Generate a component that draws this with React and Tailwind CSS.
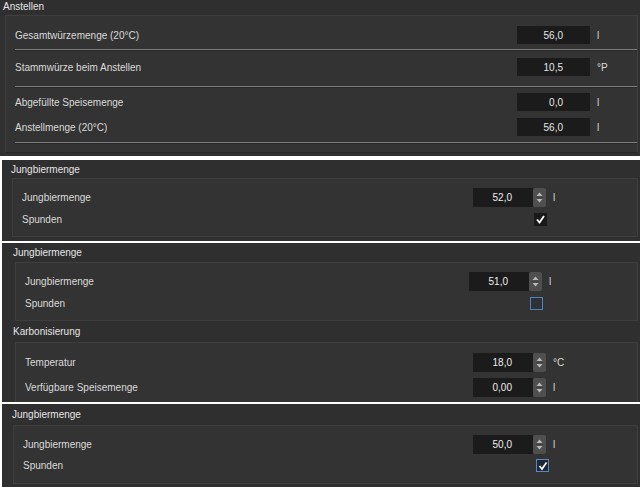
// App.jsx
const TEXT = "text-[#dadada]";

function Field({ value }) {
  return (
    <div className="flex h-[18px] w-[73px] items-center justify-end bg-[#1b1b1b] pr-[27px] text-[#e6e6e6]">
      {value}
    </div>
  );
}

function Spin({ value }) {
  return (
    <div className="flex h-[19px]">
      <div className="flex w-[60px] items-center justify-end bg-[#1b1b1b] pr-[21px] text-[#ececec]">
        {value}
      </div>
      <div className="flex w-[13px] items-center justify-center rounded-[2px] bg-[#4f4f4f]">
        <svg width="9" height="15" viewBox="0 0 9 15">
          <path d="M4.5 2.5 L7.5 6 H1.5 Z" fill="#b8b8b8" />
          <path d="M1 7.5 H8" stroke="#3e3e3e" strokeWidth="1" />
          <path d="M1.5 9 H7.5 L4.5 12.5 Z" fill="#b8b8b8" />
        </svg>
      </div>
    </div>
  );
}

function Check({ state }) {
  if (state === "dark")
    return (
      <div className="flex h-[13px] w-[13px] items-center justify-center bg-[#1a1a1a]">
        <svg width="11" height="11" viewBox="0 0 11 11">
          <path d="M2 5.5 L4.5 8.5 L9 2" stroke="#ffffff" strokeWidth="1.8" fill="none" />
        </svg>
      </div>
    );
  if (state === "blue")
    return (
      <div className="flex h-[13px] w-[13px] items-center justify-center border border-[#5b86c2] bg-[#1f2836]">
        <svg width="10" height="10" viewBox="0 0 10 10">
          <path d="M1.5 5 L4 8 L8.5 1.5" stroke="#ffffff" strokeWidth="1.7" fill="none" />
        </svg>
      </div>
    );
  return <div className="h-[13px] w-[13px] border border-[#5080bd] bg-[#2e3237]" />;
}

function Sep({ mt }) {
  return <div className={`${mt} h-[2px] border-t border-[#7d7d7d] border-b border-b-[#292929]`} />;
}

function Row1({ label, value, unit, mt }) {
  return (
    <div className={`${mt} flex h-[18px] items-center`}>
      <div className={`w-[502px] ${TEXT}`}>{label}</div>
      <Field value={value} />
      <div className={`ml-[7px] ${TEXT}`}>{unit}</div>
    </div>
  );
}

function SpinRow({ label, value, unit, lw, mt = "" }) {
  return (
    <div className={`${mt} flex h-[19px] items-center`}>
      <div className={`${lw} ${TEXT}`}>{label}</div>
      <Spin value={value} />
      <div className={`ml-[7px] ${TEXT}`}>{unit}</div>
    </div>
  );
}

function CheckRow({ lw, cm, state, mt }) {
  return (
    <div className={`${mt} flex h-[13px] items-center`}>
      <div className={`${lw} ${TEXT}`}>Spunden</div>
      <div className={cm}>
        <Check state={state} />
      </div>
    </div>
  );
}

export default function App() {
  return (
    <div className="h-[487px] w-[640px] overflow-hidden bg-white font-['Liberation_Sans',Arial,sans-serif] text-[10px]">
      {/* Anstellen */}
      <div className="flex h-[156px] flex-col bg-[#2f2f2f]">
        <div className="h-[15px] pl-[3px] pt-[1px] leading-[12px] text-[#e4e4e4]">Anstellen</div>
        <div className="ml-[5px] mr-[2px] h-[138px] border border-[#3e3e3e] border-b-[#262626] bg-[#333333] pl-[9px] pt-[10px]">
          <Row1 label="Gesamtwürzemenge (20°C)" value="56,0" unit="l" />
          <Sep mt="mt-[5px]" />
          <Row1 label="Stammwürze beim Anstellen" value="10,5" unit="°P" mt="mt-[7px]" />
          <Sep mt="mt-[10px]" />
          <Row1 label="Abgefüllte Speisemenge" value="0,0" unit="l" mt="mt-[5px]" />
          <Row1 label="Anstellmenge (20°C)" value="56,0" unit="l" mt="mt-[7px]" />
          <Sep mt="mt-[6px]" />
        </div>
      </div>

      {/* Jungbiermenge, geschlossen */}
      <div className="mt-[4px] h-[81px] border-l-2 border-white bg-[#2f2f2f]">
        <div className="flex h-[18px] items-center pl-[9px] text-[#e4e4e4]">Jungbiermenge</div>
        <div className="ml-[10px] mr-[2px] h-[59px] border border-[#3e3e3e] bg-[#333333] pl-[9px] pt-[9px]">
          <SpinRow label="Jungbiermenge" value="52,0" unit="l" lw="w-[451px]" />
          <CheckRow lw="w-[451px]" cm="ml-[61px]" state="dark" mt="mt-[6px]" />
        </div>
      </div>

      {/* Jungbiermenge + Karbonisierung */}
      <div className="mt-[2px] h-[159px] border-l-2 border-white bg-[#2f2f2f]">
        <div className="flex h-[19px] items-center pl-[11px] text-[#e4e4e4]">Jungbiermenge</div>
        <div className="ml-[13px] mr-[2px] h-[59px] border border-[#3e3e3e] bg-[#333333] pl-[9px] pt-[9px]">
          <SpinRow label="Jungbiermenge" value="51,0" unit="l" lw="w-[444px]" />
          <CheckRow lw="w-[444px]" cm="ml-[61px]" state="empty" mt="mt-[6px]" />
        </div>
        <div className="flex h-[21px] items-center pl-[11px] text-[#e4e4e4]">Karbonisierung</div>
        <div className="ml-[13px] mr-[2px] h-[60px] border-t border-l border-r border-[#3e3e3e] bg-[#333333] pl-[9px] pt-[10px]">
          <SpinRow label="Temperatur" value="18,0" unit="°C" lw="w-[448px]" />
          <SpinRow label="Verfügbare Speisemenge" value="0,00" unit="l" lw="w-[448px]" mt="mt-[6px]" />
        </div>
      </div>

      {/* Jungbiermenge, gespundet */}
      <div className="mt-[2px] h-[83px] border-l-2 border-white bg-[#2f2f2f]">
        <div className="flex h-[21px] items-center pl-[10px] text-[#e4e4e4]">Jungbiermenge</div>
        <div className="ml-[11px] mr-[2px] h-[59px] border border-[#3e3e3e] bg-[#333333] pl-[9px] pt-[9px]">
          <SpinRow label="Jungbiermenge" value="50,0" unit="l" lw="w-[450px]" />
          <CheckRow lw="w-[450px]" cm="ml-[63px]" state="blue" mt="mt-[5px]" />
        </div>
      </div>
    </div>
  );
}
